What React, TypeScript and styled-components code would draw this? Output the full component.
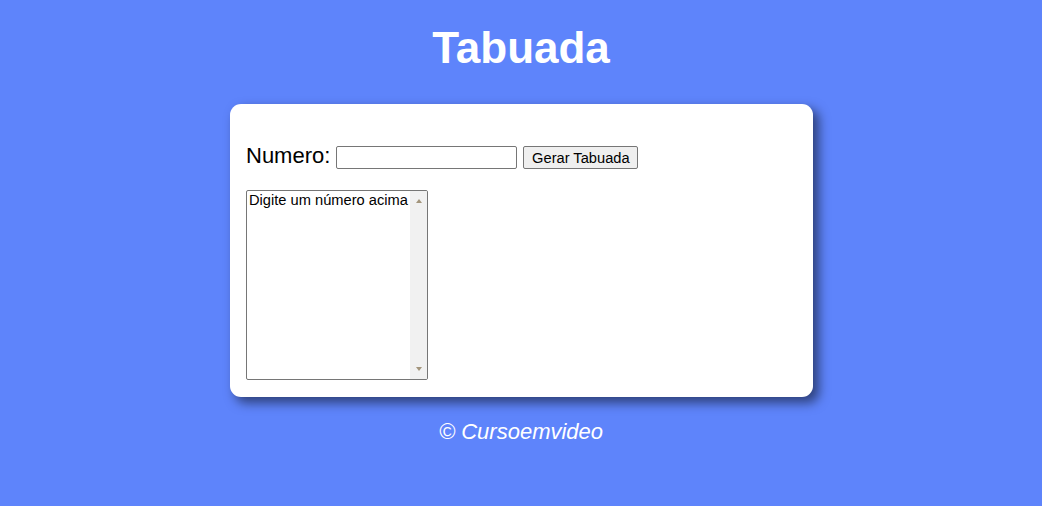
import React from "react";
import styled, { createGlobalStyle } from "styled-components";

const GlobalStyle = createGlobalStyle`
  html, body {
    margin: 0;
    padding: 0;
    background: #5e84fb;
    font-family: "Liberation Sans", Arial, sans-serif;
  }
`;

const Page = styled.div`
  min-height: 506px;
  display: flex;
  flex-direction: column;
  align-items: center;
`;

const Title = styled.h1`
  margin: 23px 0 0;
  height: 81px;
  font-size: 44px;
  line-height: 50.6px;
  font-weight: bold;
  color: #ffffff;
  text-align: center;
`;

const Card = styled.section`
  box-sizing: border-box;
  width: 583px;
  height: 293px;
  padding: 16.5px;
  background: #ffffff;
  border-radius: 11px;
  box-shadow: 5.5px 5.5px 11px rgba(0, 0, 0, 0.5);
`;

const Row = styled.div`
  margin-top: 22px;
  display: flex;
  align-items: baseline;
  gap: 6px;
  font-size: 22px;
  color: #000;
`;

const Label = styled.label`
  font-size: 22px;
  line-height: 25.3px;
`;

const NumberInput = styled.input`
  box-sizing: border-box;
  width: 181px;
  height: 23px;
  margin: 0;
  padding: 1px 2px;
  border: 1px solid #767676;
  border-radius: 2px;
  font-family: "Liberation Sans", Arial, sans-serif;
  font-size: 14.67px;
  background: #fff;
`;

const Button = styled.button`
  box-sizing: border-box;
  width: 115px;
  height: 23px;
  margin: 0;
  padding: 0 6px;
  border: 1px solid #767676;
  border-radius: 2px;
  background: #efefef;
  color: #000;
  font-family: "Liberation Sans", Arial, sans-serif;
  font-size: 14.67px;
`;

const ListBox = styled.div`
  box-sizing: border-box;
  margin-top: 21px;
  width: 182px;
  height: 190px;
  border: 1px solid #767676;
  border-radius: 2px;
  font-family: "Liberation Sans", Arial, sans-serif;
  font-size: 14.67px;
  color: #000;
  background: #fff;
  display: flex;
  overflow: hidden;
`;

const Options = styled.div`
  flex: 1;
  min-width: 0;
`;

const Option = styled.div`
  padding: 1px 0 0 2px;
  line-height: 17px;
  white-space: nowrap;
  overflow: hidden;
`;

const ScrollBar = styled.div`
  width: 17px;
  flex: none;
  background: #f1f1f1;
  display: flex;
  flex-direction: column;
  justify-content: space-between;
  align-items: center;
`;

const Arrow = styled.span<{ $down?: boolean }>`
  width: 0;
  height: 0;
  margin: ${(p) => (p.$down ? "0 0 8px" : "8px 0 0")};
  border-left: 3.5px solid transparent;
  border-right: 3.5px solid transparent;
  ${(p) =>
    p.$down
      ? "border-top: 4px solid #a3957c;"
      : "border-bottom: 4px solid #a3957c;"}
`;

const Footer = styled.p`
  margin: 22px 0 0;
  font-size: 22px;
  line-height: 25.3px;
  font-style: italic;
  color: #ffffff;
  text-align: center;
`;

export default function App() {
  return (
    <>
      <GlobalStyle />
      <Page>
        <Title>Tabuada</Title>
        <Card>
          <Row>
            <Label htmlFor="txtn">Numero:</Label>
            <NumberInput type="number" id="txtn" />
            <Button type="button">Gerar Tabuada</Button>
          </Row>
          <ListBox role="listbox" id="seltab">
            <Options>
              <Option role="option">Digite um número acima</Option>
            </Options>
            <ScrollBar aria-hidden="true">
              <Arrow />
              <Arrow $down />
            </ScrollBar>
          </ListBox>
        </Card>
        <Footer>&copy; Cursoemvideo</Footer>
      </Page>
    </>
  );
}
